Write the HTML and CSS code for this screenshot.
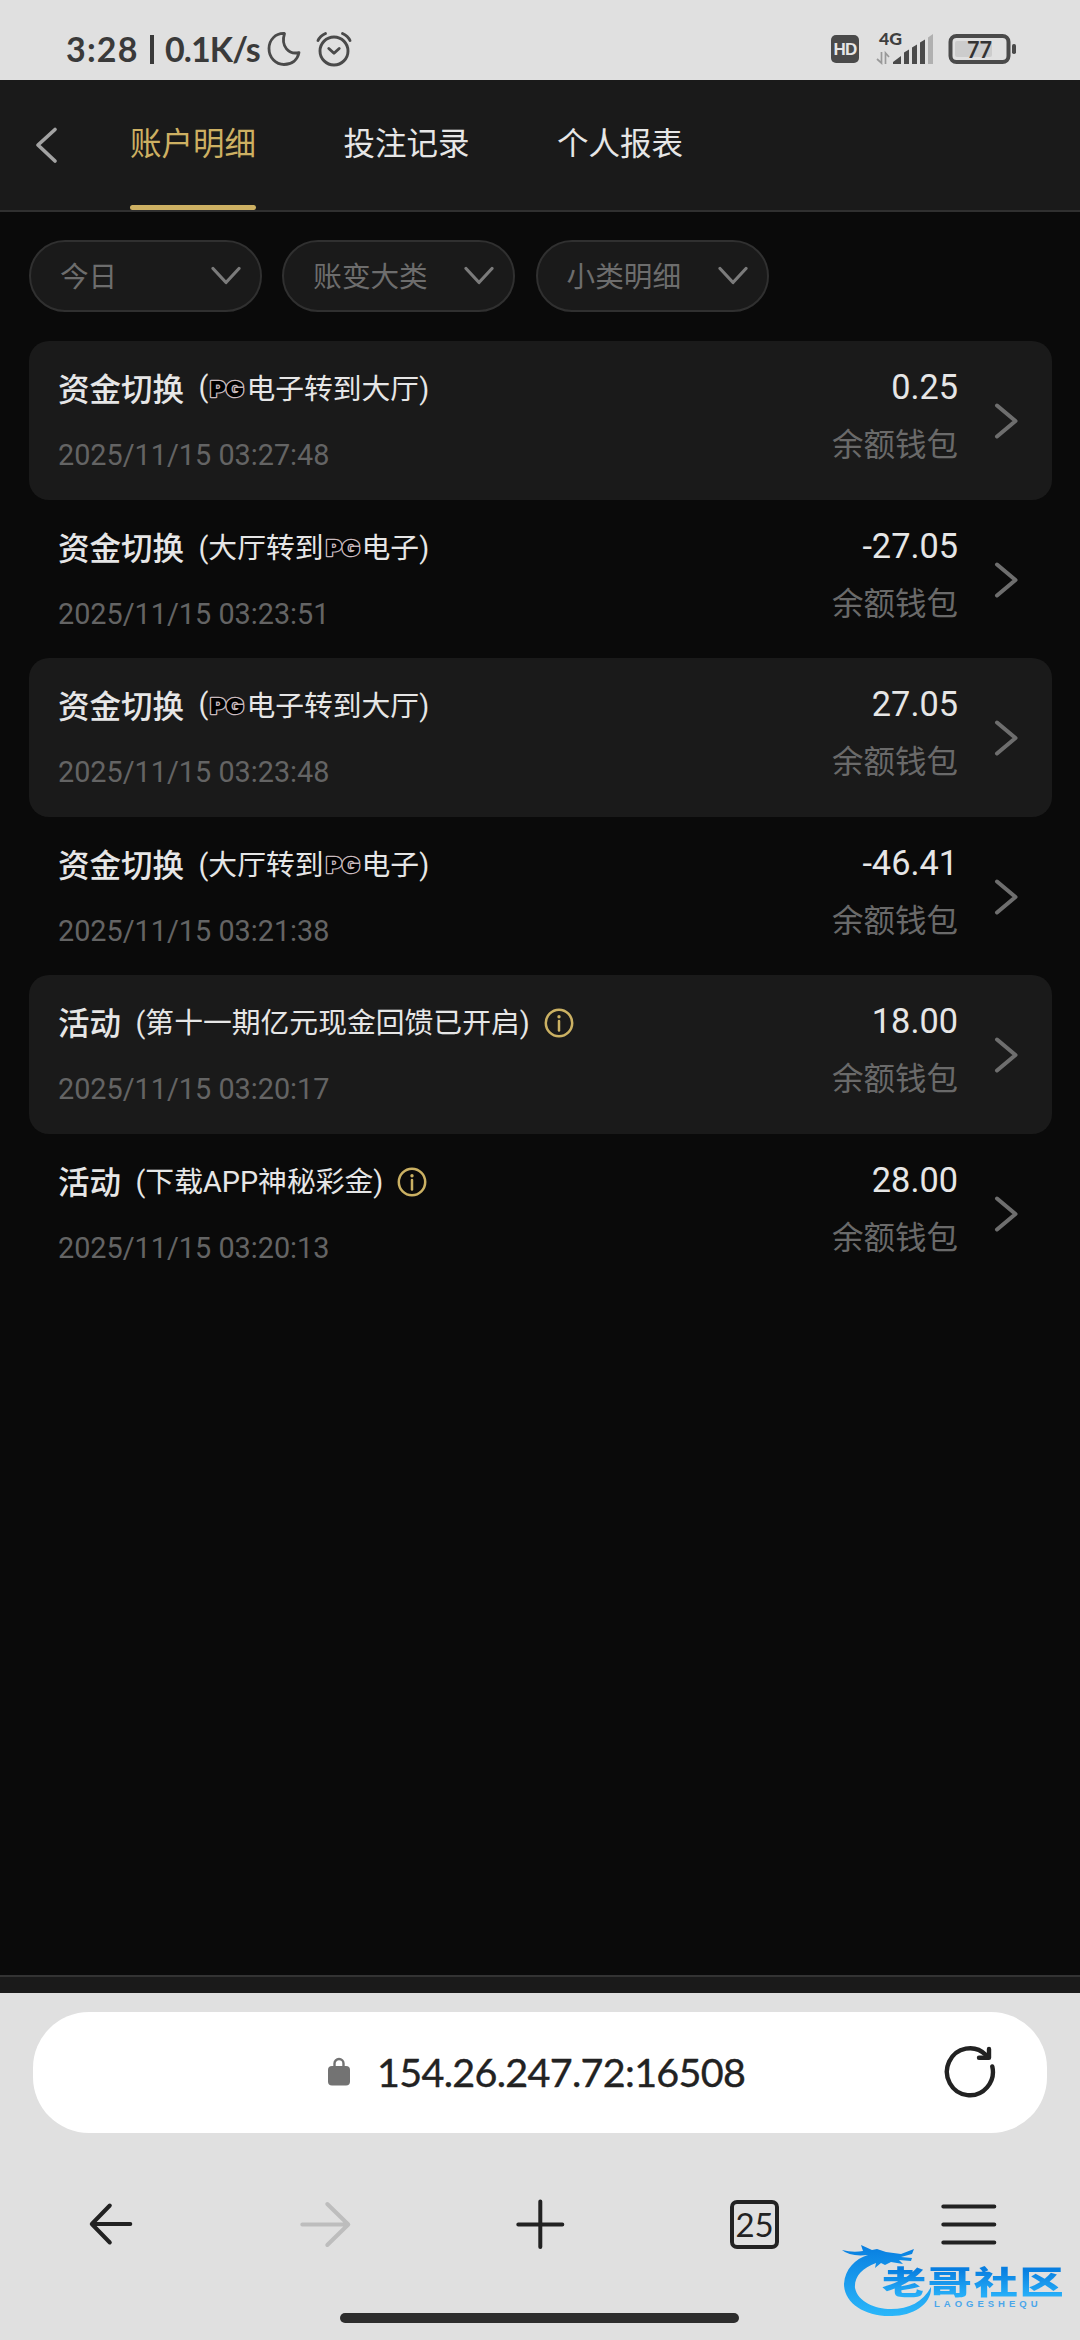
FILE: index.html
```html
<!DOCTYPE html>
<html lang="zh-CN">
<head>
<meta charset="utf-8">
<title>账户明细</title>
<link rel="stylesheet" href="styles.css">
</head>
<body>
<svg class="defs" width="0" height="0">
  <defs>
    <symbol id="down" viewBox="0 0 30 20"><path d="M2 2.5 15 16.5 28 2.5" fill="none" stroke="#7b7b7b" stroke-width="3.2" stroke-linecap="round" stroke-linejoin="round"/></symbol>
    <symbol id="next" viewBox="0 0 26 40"><path d="M4 4.500 22.500 20 4 35.500" fill="none" stroke="#6e6e6e" stroke-width="4" stroke-linecap="round" stroke-linejoin="round"/></symbol>
    <symbol id="info" viewBox="0 0 30 30"><circle cx="15" cy="15" r="13.200" fill="none" stroke="#cbb163" stroke-width="2.500"/><circle cx="15" cy="8.800" r="1.700" fill="#cbb163"/><path d="M15 13V22.500" stroke="#cbb163" stroke-width="2.500" stroke-linecap="round"/></symbol>
    <symbol id="pg" viewBox="0 0 38 22"><text x="2" y="18.500" textLength="34" lengthAdjust="spacingAndGlyphs" font-family="Inter, sans-serif" font-weight="900" font-size="22" fill="#000" stroke="#c9b9bd" stroke-width="2.400" stroke-linejoin="round" paint-order="stroke">PG</text></symbol>
  </defs>
</svg>

<header class="status">
  <div class="status-text"><span class="clock">3:28</span><span class="bar"></span><span class="speed">0.1K/s</span></div>
  <svg class="moon" width="34" height="36" viewBox="0 0 34 36"><path d="M17.500 2.500C8.500 2 2 9 2 17.500 2 27 9 33.500 17 33.500c8 0 13.500-4.500 15-12-10 2.500-18.500-6-14.500-19Z" fill="none" stroke="#4a4a4a" stroke-width="2.800" stroke-linejoin="round"/></svg>
  <svg class="alarm" width="36" height="36" viewBox="0 0 36 36" fill="none" stroke="#4a4a4a" stroke-width="2.900" stroke-linecap="round" stroke-linejoin="round"><circle cx="18" cy="20" r="14"/><path d="M12.800 17.500 18 22.300 23.200 17.500M2 9.500Q4 5 9.500 2.500M34 9.500Q32 5 26.500 2.500"/></svg>
  <span class="hd">HD</span>
  <svg class="signal" width="60" height="46" viewBox="0 -6 60 46">
    <text x="4" y="12.500" font-family="Lato, sans-serif" font-weight="900" font-size="16.500" textLength="23" lengthAdjust="spacingAndGlyphs" fill="#3f3f3f">4G</text>
    <path d="M6.500 20V31L2 27M10.500 32V21L14 25" fill="none" stroke="#999" stroke-width="1.700"/>
    <path d="M18 32V30L26 24V32ZM29 32V20.500L34 17.500V32ZM37 32V15.500L42 12.500V32ZM45 32V10.500L50 7.500V32Z" fill="#4a4a4a"/><path d="M53 32V5.500L58 2V32Z" fill="#b0b0b0"/>
  </svg>
  <svg class="battery" width="70" height="32" viewBox="0 0 70 32"><rect x="2.500" y="3" width="58" height="26" rx="6" fill="none" stroke="#4a4a4a" stroke-width="4"/><rect x="7" y="8" width="37" height="16" rx="2" fill="#ccc"/><rect x="64" y="11" width="4" height="10" rx="1.800" fill="#4a4a4a"/><text x="19" y="24.500" font-family="Lato, sans-serif" font-weight="700" font-size="23.500" textLength="25" lengthAdjust="spacingAndGlyphs" fill="#333">77</text></svg>
</header>

<main class="page">
  <nav class="tabs">
    <svg class="back" width="26" height="40" viewBox="0 0 26 40"><path d="M21 4.500 4 20 21 36" fill="none" stroke="#a3a3a3" stroke-width="3.700" stroke-linecap="round" stroke-linejoin="round"/></svg>
    <a class="tab active">账户明细</a><a class="tab">投注记录</a><a class="tab">个人报表</a>
  </nav>
  <section class="filters">
    <div class="filter"><span>今日</span><svg width="30" height="20"><use href="#down"/></svg></div>
    <div class="filter"><span>账变大类</span><svg width="30" height="20"><use href="#down"/></svg></div>
    <div class="filter"><span>小类明细</span><svg width="30" height="20"><use href="#down"/></svg></div>
  </section>
  <section class="list">
    <article class="row"><div class="info"><div class="title"><b>资金切换</b><span class="note">(<svg class="pg"><use href="#pg"/></svg>电子转到大厅)</span></div><time>2025/11/15 03:27:48</time></div><div class="sum"><strong>0.25</strong><span>余额钱包</span></div><svg class="next"><use href="#next"/></svg></article>
    <article class="row"><div class="info"><div class="title"><b>资金切换</b><span class="note">(大厅转到<svg class="pg"><use href="#pg"/></svg>电子)</span></div><time>2025/11/15 03:23:51</time></div><div class="sum"><strong>-27.05</strong><span>余额钱包</span></div><svg class="next"><use href="#next"/></svg></article>
    <article class="row"><div class="info"><div class="title"><b>资金切换</b><span class="note">(<svg class="pg"><use href="#pg"/></svg>电子转到大厅)</span></div><time>2025/11/15 03:23:48</time></div><div class="sum"><strong>27.05</strong><span>余额钱包</span></div><svg class="next"><use href="#next"/></svg></article>
    <article class="row"><div class="info"><div class="title"><b>资金切换</b><span class="note">(大厅转到<svg class="pg"><use href="#pg"/></svg>电子)</span></div><time>2025/11/15 03:21:38</time></div><div class="sum"><strong>-46.41</strong><span>余额钱包</span></div><svg class="next"><use href="#next"/></svg></article>
    <article class="row"><div class="info"><div class="title"><b>活动</b><span class="note">(第十一期亿元现金回馈已开启)</span><svg class="tip"><use href="#info"/></svg></div><time>2025/11/15 03:20:17</time></div><div class="sum"><strong>18.00</strong><span>余额钱包</span></div><svg class="next"><use href="#next"/></svg></article>
    <article class="row"><div class="info"><div class="title"><b>活动</b><span class="note">(下载APP神秘彩金)</span><svg class="tip"><use href="#info"/></svg></div><time>2025/11/15 03:20:13</time></div><div class="sum"><strong>28.00</strong><span>余额钱包</span></div><svg class="next"><use href="#next"/></svg></article>
  </section>
  <div class="page-foot"></div>
</main>

<footer class="browser">
  <div class="address">
    <svg class="lock" width="22" height="30" viewBox="0 0 22 30"><path d="M6.500 12V6.500a4.500 4.500 0 0 1 9 0V12" fill="none" stroke="#737373" stroke-width="2.400"/><rect y="9" width="22" height="19.500" rx="4" fill="#737373"/></svg>
    <span class="url">154.26.247.72:16508</span>
    <svg class="reload" width="54" height="54" viewBox="0 0 54 54" fill="none" stroke="#222" stroke-width="4.400" stroke-linecap="round"><path d="M49.300 21.500A23 23.500 0 1 1 43 10"/><path d="M46 4V12.800H36" stroke-linejoin="round"/></svg>
  </div>
  <nav class="tools">
    <svg viewBox="0 0 60 60"><path d="M49 30H11M28.500 11.500 10.500 30 28.500 48.500" stroke="#222"/></svg>
    <svg viewBox="0 0 60 60"><path d="M7 30.500H52M32 10 53 30.500 32 51" stroke="#bdbdbd"/></svg>
    <svg viewBox="0 0 60 60"><path d="M8 30.500H52M30 7.500V53" stroke="#222"/></svg>
    <span class="count"><span>25</span></span>
    <svg viewBox="0 0 60 60"><path d="M4 12.500H55M4 30.500H55M4 48.500H55" stroke="#222"/></svg>
  </nav>
  <div class="home"></div>
</footer>

<div class="brand">
  <svg class="dragon" width="100" height="76" viewBox="0 0 100 76">
    <defs><linearGradient id="blue" x1="0" y1="0" x2="0" y2="1"><stop offset="0" stop-color="#087ee0"/><stop offset="1" stop-color="#2bb7fa"/></linearGradient></defs>
    <path d="M1 7Q12 10 22 8L20 2 31 7 36 6 45 9 60 11 73 6 71 11 60 14 71 15 70 18 58 17 62 21 50 19 44 22 40 20 34 25 35 20C21 25 13 34 14 45 17 59 34 66 50 66 68 66 82 59 90 44 91 61 72 73 51 73 24 74 3 60 3 41 4 26 14 16 27 12Q9 14 1 7Z" fill="url(#blue)"/>
  </svg>
  <div class="brand-name">
    <span class="brand-cn">老哥社区</span>
    <span class="brand-en">LAOGESHEQU</span>
  </div>
</div>
</body>
</html>
```
FILE: styles.css
```css
* { box-sizing: border-box; }
body {
  margin: 0;
  width: 1080px;
  height: 2340px;
  position: relative;
  display: flex;
  flex-direction: column;
  overflow: hidden;
  background: #0a0a0a;
  color: #e6e6e6;
  font-family: Roboto, "Noto Sans CJK SC", sans-serif;
}
svg { display: block; flex: none; }
.defs { position: absolute; }

.status {
  height: 80px;
  padding: 18px 62px 0 66px;
  display: flex;
  align-items: center;
  background: #e0e0e0;
}
.status-text {
  width: 194px;
  display: flex;
  align-items: center;
  white-space: nowrap;
  font: 700 34px/40px Lato, sans-serif;
  color: #3a3a3a;
}
.clock { width: 84px; letter-spacing: 1.2px; }
.bar { width: 4px; height: 29px; background: #3a3a3a; }
.speed { margin-left: 11px; letter-spacing: -0.9px; }
.moon { margin-left: 7px; }
.alarm { margin-left: 15px; }
.hd {
  margin-left: auto;
  width: 28px;
  height: 28px;
  border-radius: 5px;
  background: #4a4a4a;
  color: #e6e6e6;
  font: 700 17px/29px "Liberation Sans", sans-serif;
  letter-spacing: -0.8px;
  text-align: center;
}
.signal { margin-left: 16px; }
.battery { margin-left: 13px; }

.page { height: 1913px; display: flex; flex-direction: column; }
.tabs {
  height: 132px;
  padding-left: 34px;
  display: flex;
  align-items: stretch;
  background: #1a1a1a;
  border-bottom: 2px solid #303030;
}
.back { margin: 45px 70px 0 0; }
.tab {
  height: 130px;
  width: 126px;
  margin-right: 87.5px;
  padding-top: 4px;
  font-size: 31.5px;
  line-height: 121px;
  white-space: nowrap;
  display: flex;
  flex-direction: column;
}
.tab.active { color: #cdb062; }
.tab.active::after {
  content: "";
  height: 5px;
  border-radius: 3px;
  background: #cdb062;
}

.filters { display: flex; gap: 20.3px; padding: 28px 29px 29px; }
.filter {
  width: 233px;
  height: 72px;
  padding: 0 19px 0 29px;
  border: 2px solid #303030;
  border-radius: 36px;
  display: flex;
  align-items: center;
  justify-content: space-between;
  background: #1a1a1a;
  color: #6d6d6d;
  font-size: 28.6px;
}
.filter span { margin-top: -3px; }

.list { padding: 0 28px 0 29px; flex: 1; }
.row {
  height: 158.5px;
  padding: 0 33px 0 29px;
  border-radius: 20px;
  display: flex;
}
.row:nth-child(odd) { background: #1a1a1a; }
.info { flex: 1; padding-top: 24px; }
.title { display: flex; align-items: center; height: 44px; white-space: nowrap; }
.title b { font-size: 31.5px; font-weight: 500; margin-right: 14.5px; }
.note { display: flex; align-items: center; height: 44px; font-size: 28.8px; margin-top: -1px; }
.pg { width: 38px; height: 22px; margin-top: 5px; }
.tip { width: 30px; height: 30px; margin: 4px 0 0 14px; }
time { display: block; margin-top: 26px; font-size: 28.8px; line-height: 40px; color: #646464; }
.sum {
  display: flex;
  flex-direction: column;
  align-items: flex-end;
  padding-top: 26px;
  margin-right: 35px;
}
.sum strong { font-size: 34.3px; font-weight: 400; line-height: 40px; }
.sum span { font-size: 31.5px; line-height: 46px; margin-top: 16px; color: #6a6a6a; }
.next { width: 26px; height: 40px; margin-top: 60px; }
.page-foot { height: 18px; background: #1a1a1a; border-top: 2px solid #333; }

.browser { height: 347px; padding-top: 19px; background: #e0e0e0; }
.address {
  height: 121px;
  margin: 0 33px;
  padding: 0 50px 2px 295px;
  border-radius: 56px;
  display: flex;
  align-items: center;
  background: #fff;
}
.url {
  margin-left: 27px;
  font: 400 39.5px/50px Lato, sans-serif;
  letter-spacing: -0.7px;
  -webkit-text-stroke: 0.4px #222;
  color: #222;
}
.reload { margin-left: auto; }
.tools { display: flex; padding: 61px 3.5px 0; }
.tools > * { flex: 1; height: 60px; display: flex; justify-content: center; align-items: center; }
.tools svg { fill: none; stroke-width: 4; stroke-linecap: round; stroke-linejoin: round; }
.count > span {
  width: 49px;
  height: 49px;
  border: 4px solid #222;
  border-radius: 7px;
  font: 400 33px/41px Lato, sans-serif;
  text-align: center;
  color: #222;
}
.home { width: 399px; height: 10px; margin: 59px auto 0 340px; border-radius: 5px; background: #2d2d2d; }

/* community badge floating over the toolbar */
.brand { position: absolute; left: 841px; top: 2243px; width: 225px; height: 76px; }
.dragon { position: absolute; left: 0; top: 0; }
.brand-name {
  position: absolute;
  left: 41px;
  top: 19px;
  display: flex;
  flex-direction: column;
}
.brand-cn {
  height: 37px;
  font: 900 32px/37px "Noto Sans CJK SC", sans-serif;
  letter-spacing: 1.2px;
  white-space: nowrap;
  transform: scaleX(1.38);
  transform-origin: 0 0;
  background: linear-gradient(#087ee0 20%, #26aef8 90%);
  -webkit-background-clip: text;
  background-clip: text;
  color: transparent;
}
.brand-en {
  padding-left: 52px;
  font: 700 9.5px/10px "Liberation Sans", sans-serif;
  letter-spacing: 4px;
  white-space: nowrap;
  color: #4aa6ea;
}
```
